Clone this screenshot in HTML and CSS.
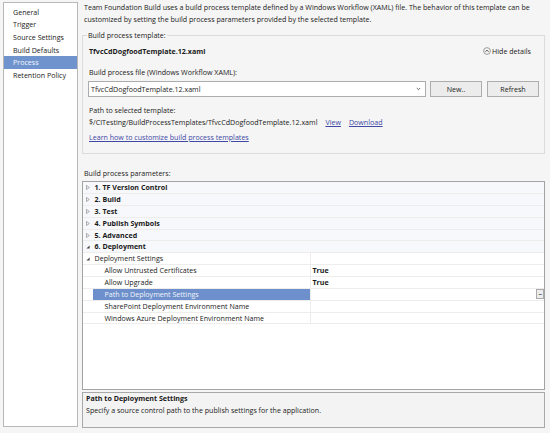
FILE: index.html
```html
<!DOCTYPE html>
<html>
<head>
<meta charset="utf-8">
<link rel="stylesheet" href="styles.css">
</head>
<body>
<div class="window">
  <nav class="nav">
    <div class="nav-item">General</div>
    <div class="nav-item">Trigger</div>
    <div class="nav-item">Source Settings</div>
    <div class="nav-item">Build Defaults</div>
    <div class="nav-item active">Process</div>
    <div class="nav-item">Retention Policy</div>
  </nav>
  <main class="main">
    <p class="intro">Team Foundation Build uses a build process template defined by a Windows Workflow (XAML) file. The behavior of this template can be<br>customized by setting the build process parameters provided by the selected template.</p>
    <fieldset class="group">
      <legend class="legend">Build process template:</legend>
      <div class="tpl-head">
        <span class="tpl-name">TfvcCdDogfoodTemplate.12.xaml</span>
        <span class="hide"><svg class="hide-icon" width="8" height="8" viewBox="0 0 8 8"><circle cx="4" cy="4" r="3.4" fill="#f2f2f2" stroke="#8a8a8a" stroke-width="0.8"/><path d="M2.5 4.7 L4 3.2 L5.5 4.7" fill="none" stroke="#333" stroke-width="0.9"/></svg>Hide details</span>
      </div>
      <div class="label first">Build process file (Windows Workflow XAML):</div>
      <div class="file-row">
        <div class="select"><span>TfvcCdDogfoodTemplate.12.xaml</span><svg width="5" height="4" viewBox="0 0 5 4"><path d="M0.8 1 L2.5 2.7 L4.2 1" fill="none" stroke="#444" stroke-width="0.8"/></svg></div>
        <button class="btn">New..</button>
        <button class="btn btn-refresh">Refresh</button>
      </div>
      <div class="label second">Path to selected template:</div>
      <div class="path">$/CITesting/BuildProcessTemplates/TfvcCdDogfoodTemplate.12.xaml<a class="link path-link">View</a><a class="link path-link">Download</a></div>
      <a class="link learn">Learn how to customize build process templates</a>
    </fieldset>
    <div class="params-label">Build process parameters:</div>
    <div class="grid">
      <div class="row cat"><span class="gutter"><svg width="4" height="5" viewBox="0 0 4 5"><path d="M0.5 0.5 L3.3 2.5 L0.5 4.5 Z" fill="none" stroke="#8c8c8c" stroke-width="0.7"/></svg></span><span class="cat-name">1. TF Version Control</span></div>
      <div class="row cat"><span class="gutter"><svg width="4" height="5" viewBox="0 0 4 5"><path d="M0.5 0.5 L3.3 2.5 L0.5 4.5 Z" fill="none" stroke="#8c8c8c" stroke-width="0.7"/></svg></span><span class="cat-name">2. Build</span></div>
      <div class="row cat"><span class="gutter"><svg width="4" height="5" viewBox="0 0 4 5"><path d="M0.5 0.5 L3.3 2.5 L0.5 4.5 Z" fill="none" stroke="#8c8c8c" stroke-width="0.7"/></svg></span><span class="cat-name">3. Test</span></div>
      <div class="row cat"><span class="gutter"><svg width="4" height="5" viewBox="0 0 4 5"><path d="M0.5 0.5 L3.3 2.5 L0.5 4.5 Z" fill="none" stroke="#8c8c8c" stroke-width="0.7"/></svg></span><span class="cat-name">4. Publish Symbols</span></div>
      <div class="row cat"><span class="gutter"><svg width="4" height="5" viewBox="0 0 4 5"><path d="M0.5 0.5 L3.3 2.5 L0.5 4.5 Z" fill="none" stroke="#8c8c8c" stroke-width="0.7"/></svg></span><span class="cat-name">5. Advanced</span></div>
      <div class="row cat"><span class="gutter"><svg width="4" height="4" viewBox="0 0 4 4"><path d="M3.6 0.4 L3.6 3.6 L0.4 3.6 Z" fill="#444"/></svg></span><span class="cat-name">6. Deployment</span></div>
      <div class="row prop"><span class="gutter"><svg width="4" height="4" viewBox="0 0 4 4"><path d="M3.6 0.4 L3.6 3.6 L0.4 3.6 Z" fill="#444"/></svg></span><span class="name sub">Deployment Settings</span><span class="value"></span></div>
      <div class="row prop"><span class="gutter"></span><span class="name">Allow Untrusted Certificates</span><span class="value strong">True</span></div>
      <div class="row prop"><span class="gutter"></span><span class="name">Allow Upgrade</span><span class="value strong">True</span></div>
      <div class="row prop"><span class="gutter"></span><span class="name selected">Path to Deployment Settings</span><span class="value"><span class="ellipsis">...</span></span></div>
      <div class="row prop"><span class="gutter"></span><span class="name">SharePoint Deployment Environment Name</span><span class="value"></span></div>
      <div class="row prop"><span class="gutter"></span><span class="name">Windows Azure Deployment Environment Name</span><span class="value"></span></div>
    </div>
    <div class="desc">
      <div class="desc-title">Path to Deployment Settings</div>
      <div>Specify a source control path to the publish settings for the application.</div>
    </div>
  </main>
</div>
</body>
</html>
```

FILE: styles.css
```css
html, body {
  margin: 0;
  padding: 0;
}
body {
  background: #f5f5f5;
  font-family: "Open Sans", "Noto Sans", sans-serif;
  font-size: 7.1px;
  line-height: 11.5px;
  color: #1a1a1a;
}
.window {
  display: flex;
  width: 550px;
  height: 433px;
  box-sizing: border-box;
  padding: 2px 5px 5px 3px;
  gap: 4px;
}
.nav {
  width: 75px;
  flex: none;
  box-sizing: border-box;
  background: #fff;
  border: 1px solid #b8b8b8;
  padding-top: 2.5px;
  margin-bottom: 1px;
}
.nav-item {
  height: 12.7px;
  line-height: 12.7px;
  padding-left: 9px;
  white-space: nowrap;
}
.nav-item.active {
  background: #6f93cd;
  color: #f4f7fc;
}
.main {
  flex: 1;
  min-width: 0;
  display: flex;
  flex-direction: column;
}
.intro {
  margin: 0 0 0 2px;
  white-space: nowrap;
}
.group {
  margin: 5px 0 0;
  border: 1px solid #dcdcdc;
  padding: 4px 4px 9.5px 6px;
  min-width: 0;
}
.legend {
  padding: 0 1px;
  margin-left: -2px;
}
.tpl-head {
  display: flex;
  justify-content: space-between;
  align-items: center;
}
.tpl-name {
  font-weight: bold;
}
.hide {
  display: flex;
  align-items: center;
  gap: 1px;
  margin-right: 9px;
}
.hide-icon {
  display: block;
}
.label.first {
  margin-top: 9.5px;
}
.label.second {
  margin-top: 7.5px;
}
.file-row {
  display: flex;
  height: 16px;
  margin-top: 3.25px;
}
.select {
  width: 338px;
  margin-left: -1px;
  box-sizing: border-box;
  border: 1px solid #acacac;
  background: #fff;
  display: flex;
  align-items: center;
  justify-content: space-between;
  padding: 0 4px 0 2px;
}
.btn {
  width: 52px;
  height: 16px;
  box-sizing: border-box;
  margin-left: 4px;
  border: 1px solid #adadad;
  background: #ececec;
  font: inherit;
  color: inherit;
  padding: 0;
}
.btn-refresh {
  margin-left: 5px;
}
.path {
  margin-top: 0.5px;
  white-space: nowrap;
}
.link {
  color: #4048a6;
  text-decoration: underline;
}
.path-link {
  margin-left: 8px;
}
.learn {
  display: block;
  margin-top: 3.5px;
}
.params-label {
  margin-top: 14px;
  padding-left: 2px;
}
.grid {
  margin-top: 2px;
  flex: 1;
  border: 1px solid #a3a3a3;
  background: #fff;
}
.row {
  display: flex;
  height: 11.85px;
  line-height: 10.85px;
  box-sizing: border-box;
  border-bottom: 1px solid #efecec;
}
.row.cat {
  background: #f7f8fb;
  font-weight: bold;
}
.gutter {
  width: 10px;
  flex: none;
  display: flex;
  align-items: center;
  justify-content: center;
}
.gutter svg {
  display: block;
}
.cat-name {
  padding-left: 1.5px;
}
.name {
  width: 217px;
  flex: none;
  box-sizing: border-box;
  padding-left: 11.5px;
  white-space: nowrap;
}
.name.sub {
  padding-left: 1.5px;
}
.name.selected {
  background: #6d8fcb;
  color: #f2f5fb;
}
.value {
  flex: 1;
  border-left: 1px solid #efecec;
  padding-left: 1.5px;
  display: flex;
  align-items: center;
}
.value.strong {
  font-weight: bold;
}
.ellipsis {
  margin-left: auto;
  width: 8px;
  height: 10px;
  box-sizing: border-box;
  border: 1px solid #a9a9a9;
  background: #ececec;
  font-size: 5px;
  line-height: 6px;
  text-align: center;
  font-weight: bold;
  letter-spacing: -0.5px;
}
.desc {
  margin-top: 2px;
  height: 36px;
  flex: none;
  box-sizing: border-box;
  border: 1px solid #a8a8a8;
  background: #f3f3f3;
  padding: 0 3px;
}
.desc-title {
  font-weight: bold;
}
```
